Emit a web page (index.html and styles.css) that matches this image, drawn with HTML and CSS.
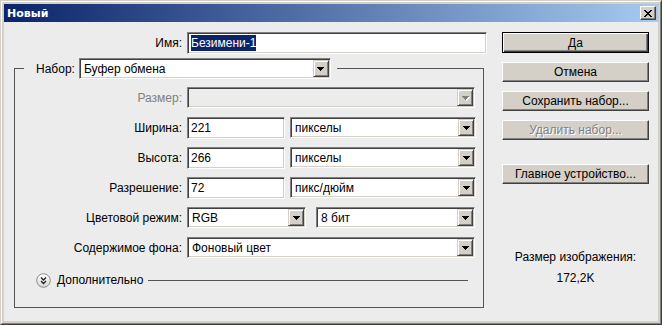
FILE: index.html
```html
<!DOCTYPE html>
<html>
<head>
  <title>Новый</title>
  <meta charset="UTF-8" />
  <link rel="stylesheet" href="styles.css">
</head>
<body>
  <div class="window">
    <div class="frame">
      <div class="titlebar">
        <span class="title">Новый</span>
        <span class="close-btn">
          <svg width="8" height="7" viewBox="0 0 8 7" shape-rendering="crispEdges"><path d="M0 0h2v1h1v1h2v-1h1v-1h2v1h-1v1h-1v1h-1v1h1v1h1v1h1v1h-2v-1h-1v-1h-2v1h-1v1h-2v-1h1v-1h1v-1h1v-1h-1v-1h-1v-1h-1z"/></svg>
        </span>
      </div>

      <div class="client">
        <div class="main">
          <div class="name-row">
            <label class="lbl">Имя:</label>
            <div class="input name-input"><span class="selected">Безимени-1</span></div>
          </div>

          <fieldset class="group">
            <legend class="group-legend">
              <span>Набор:</span>
              <div class="select w-preset"><span class="val">Буфер обмена</span><span class="arrow"><svg width="7" height="4" viewBox="0 0 7 4" shape-rendering="crispEdges"><path d="M0 0h7v1h-1v1h-1v1h-1v1h-1v-1h-1v-1h-1v-1h-1z"/></svg></span></div>
            </legend>

            <div class="rows">
              <div class="row">
                <label class="lbl disabled">Размер:</label>
                <div class="select w-full is-disabled"><span class="val"></span><span class="arrow"><svg width="7" height="4" viewBox="0 0 7 4" shape-rendering="crispEdges"><path d="M0 0h7v1h-1v1h-1v1h-1v1h-1v-1h-1v-1h-1v-1h-1z"/></svg></span></div>
              </div>
              <div class="row">
                <label class="lbl">Ширина:</label>
                <div class="input w-num">221</div>
                <div class="select w-unit"><span class="val">пикселы</span><span class="arrow"><svg width="7" height="4" viewBox="0 0 7 4" shape-rendering="crispEdges"><path d="M0 0h7v1h-1v1h-1v1h-1v1h-1v-1h-1v-1h-1v-1h-1z"/></svg></span></div>
              </div>
              <div class="row">
                <label class="lbl">Высота:</label>
                <div class="input w-num">266</div>
                <div class="select w-unit"><span class="val">пикселы</span><span class="arrow"><svg width="7" height="4" viewBox="0 0 7 4" shape-rendering="crispEdges"><path d="M0 0h7v1h-1v1h-1v1h-1v1h-1v-1h-1v-1h-1v-1h-1z"/></svg></span></div>
              </div>
              <div class="row">
                <label class="lbl">Разрешение:</label>
                <div class="input w-num">72</div>
                <div class="select w-unit"><span class="val">пикс/дюйм</span><span class="arrow"><svg width="7" height="4" viewBox="0 0 7 4" shape-rendering="crispEdges"><path d="M0 0h7v1h-1v1h-1v1h-1v1h-1v-1h-1v-1h-1v-1h-1z"/></svg></span></div>
              </div>
              <div class="row">
                <label class="lbl">Цветовой режим:</label>
                <div class="select w-mode"><span class="val">RGB</span><span class="arrow"><svg width="7" height="4" viewBox="0 0 7 4" shape-rendering="crispEdges"><path d="M0 0h7v1h-1v1h-1v1h-1v1h-1v-1h-1v-1h-1v-1h-1z"/></svg></span></div>
                <div class="select w-depth"><span class="val">8 бит</span><span class="arrow"><svg width="7" height="4" viewBox="0 0 7 4" shape-rendering="crispEdges"><path d="M0 0h7v1h-1v1h-1v1h-1v1h-1v-1h-1v-1h-1v-1h-1z"/></svg></span></div>
              </div>
              <div class="row">
                <label class="lbl">Содержимое фона:</label>
                <div class="select w-full"><span class="val">Фоновый цвет</span><span class="arrow"><svg width="7" height="4" viewBox="0 0 7 4" shape-rendering="crispEdges"><path d="M0 0h7v1h-1v1h-1v1h-1v1h-1v-1h-1v-1h-1v-1h-1z"/></svg></span></div>
              </div>
            </div>

            <div class="advanced">
              <svg class="adv-icon" width="15" height="15" viewBox="0 0 15 15">
                <defs>
                  <linearGradient id="advfill" x1="0" y1="0" x2="0" y2="1">
                    <stop offset="0" stop-color="#ffffff"/>
                    <stop offset="1" stop-color="#d6d6d6"/>
                  </linearGradient>
                </defs>
                <circle cx="7.5" cy="7.5" r="6.8" fill="url(#advfill)" stroke="#8a8a8a" stroke-width="1"/>
                <path d="M5 4.5l2.5 2.5 2.5-2.5M5 8l2.5 2.5 2.5-2.5" fill="none" stroke="#222" stroke-width="1.3"/>
              </svg>
              <span class="adv-text">Дополнительно</span>
              <span class="adv-line"></span>
            </div>
          </fieldset>
        </div>

        <div class="side">
          <div class="btn btn-default">Да</div>
          <div class="btn">Отмена</div>
          <div class="btn">Сохранить набор...</div>
          <div class="btn btn-disabled">Удалить набор...</div>
          <div class="btn btn-gap">Главное устройство...</div>
          <div class="info">
            <div class="info-line">Размер изображения:</div>
            <div class="info-line">172,2K</div>
          </div>
        </div>
      </div>
    </div>
  </div>
</body>
</html>
```

FILE: styles.css
```css
body { margin: 0; font-family: "Liberation Sans", Arial, sans-serif; font-size: 12px; color: #000; background: #ececec; }

.window { width: 662px; height: 325px; box-sizing: border-box; background: #d4d0c8; border: 1px solid; border-color: #d4d0c8 #404040 #404040 #d4d0c8; }
.frame { height: 100%; box-sizing: border-box; border: 1px solid; border-color: #fff #808080 #808080 #fff; padding: 2px; display: flex; flex-direction: column; }

.titlebar { height: 18px; display: flex; align-items: center; justify-content: space-between; background: linear-gradient(to right, #0a246a, #a6caf0); padding: 0 2px 0 3px; }
.title { color: #fff; font-family: "DejaVu Sans", Verdana, sans-serif; font-weight: bold; font-size: 11px; }
.close-btn { width: 16px; height: 14px; box-sizing: border-box; display: flex; align-items: center; justify-content: center; background: #d4d0c8; border: 1px solid; border-color: #fff #404040 #404040 #fff; box-shadow: inset -1px -1px #808080; }

.client { flex: 1; display: flex; background: #ececec; }

.main { width: 470px; padding: 10px 0 0 10px; }
.name-row { display: flex; align-items: center; height: 22px; }
.name-row .lbl { width: 168px; }

.lbl { text-align: right; margin-right: 5px; flex: none; white-space: nowrap; }
.lbl.disabled { color: #808080; }

.input { height: 22px; box-sizing: border-box; background: #fff; border: 1px solid; border-color: #808080 #fff #fff #808080; box-shadow: inset 1px 1px #404040, inset -1px -1px #d4d0c8; padding: 0 3px; line-height: 20px; white-space: nowrap; flex: none; }
.name-input { width: 300px; }
.selected { background: #0a246a; color: #fff; padding: 1px 0; }
.w-num { width: 98px; margin-right: 5px; }

.select { height: 21px; box-sizing: border-box; display: flex; align-items: center; justify-content: space-between; background: #fff; border: 1px solid; border-color: #808080 #fff #fff #808080; box-shadow: inset 1px 1px #404040, inset -1px -1px #d4d0c8; padding: 1px 1px 1px 4px; flex: none; }
.select .val { white-space: nowrap; }
.select .arrow { width: 16px; height: 17px; box-sizing: border-box; display: flex; align-items: center; justify-content: center; background: #d4d0c8; border: 1px solid; border-color: #d4d0c8 #404040 #404040 #d4d0c8; box-shadow: inset 1px 1px #fff, inset -1px -1px #808080; }
.select.is-disabled { background: #ececec; }
.select.is-disabled .arrow svg { fill: #808080; filter: drop-shadow(1px 1px 0 #fff); }

.w-preset { width: 252px; }
.w-full { width: 288px; }
.w-unit { width: 186px; }
.w-mode { width: 119px; margin-right: 10px; }
.w-depth { width: 159px; }

.group { width: 470px; box-sizing: border-box; margin: 4px 0 0 0; padding: 0 0 19px 0; border: 1px solid #555; min-inline-size: 0; }
.group-legend { display: flex; align-items: center; gap: 4px; margin-left: 9px; padding: 0 6px 0 12px; }

.rows { display: flex; flex-direction: column; gap: 9px; padding-top: 8px; }
.row { display: flex; align-items: center; height: 21px; }
.row .lbl { width: 167px; }

.advanced { display: flex; align-items: center; height: 16px; margin-top: 14px; padding: 0 15px 0 21px; }
.adv-icon { flex: none; }
.adv-text { margin-left: 6px; white-space: nowrap; }
.adv-line { flex: 1; height: 1px; background: #555; margin-left: 5px; }

.side { width: 147px; margin-left: 18px; padding-top: 10px; display: flex; flex-direction: column; }
.btn { height: 20px; box-sizing: border-box; margin-top: 9px; display: flex; align-items: center; justify-content: center; background: #d4d0c8; border: 1px solid; border-color: #fff #404040 #404040 #fff; box-shadow: inset -1px -1px #808080; white-space: nowrap; }
.btn-default { margin-top: 0; height: 21px; border-color: #000; box-shadow: inset 1px 1px #fff, inset -1px -1px #404040, inset -2px -2px #808080; }
.btn-disabled { color: #808080; text-shadow: 1px 1px 0 #fff; }
.btn-gap { margin-top: 24px; }

.info { margin-top: 63px; text-align: center; }
.info-line { line-height: 21px; }
```
